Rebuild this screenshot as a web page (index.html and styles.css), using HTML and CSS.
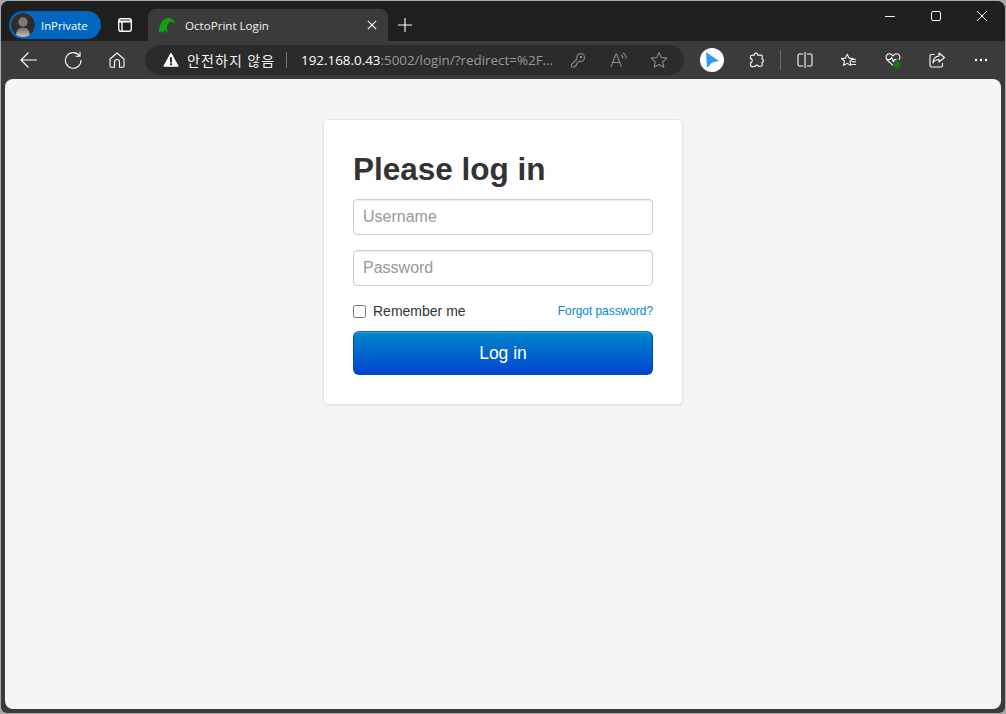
FILE: index.html
```html
<!DOCTYPE html>
<html lang="en">
<head>
<meta charset="utf-8">
<title>OctoPrint Login</title>
<link rel="stylesheet" href="styles.css">
</head>
<body>
<div class="window">
  <div class="tabstrip">
    <div class="inprivate">
      <span class="avatar">
        <svg viewBox="0 0 24 24" width="24" height="24"><defs><linearGradient id="ava" x1="0" y1="0" x2="0" y2="1"><stop offset="0" stop-color="#6f6d6b"/><stop offset="1" stop-color="#c4c0b8"/></linearGradient></defs><circle cx="12" cy="12" r="12" fill="#302d2b"/><circle cx="12" cy="9" r="4.700" fill="#7c7a78"/><path d="M5 24c-.5-6 2.500-9.500 7-9.500s7.500 3.500 6.500 9.500z" fill="url(#ava)"/></svg>
      </span>
      <span class="inprivate-label">InPrivate</span>
    </div>
    <span class="tabs-btn">
      <svg viewBox="0 0 14 14" width="14" height="14" fill="none" stroke="#fff" stroke-width="1.400"><rect x=".7" y=".7" width="12.600" height="12.600" rx="2.200"/><path d="M.7 3.500h12.600" stroke-width="1.800"/><path d="M4 3.500v9.800"/></svg>
    </span>
    <div class="tab">
      <svg class="favicon" viewBox="0 0 16 15" width="16" height="15"><path d="M0 15C-.3 6.500 3.500 0 10 0c2.500 0 5 1.500 6 5.500-1.500-1.500-3-2-4.500-1.400C9.500 5 8 7 8 9.500c0 2 .3 3.800 1 5.500l-3.200-2.800L4 15l-1.500-1.800z" fill="#13a10e"/></svg>
      <span class="tab-title">OctoPrint Login</span>
      <svg class="tab-close" viewBox="0 0 10 10" width="10" height="10" stroke="#fff" stroke-width="1.100"><path d="M.8.800l8.400 8.400M9.200.800L.8 9.200"/></svg>
    </div>
    <span class="newtab">
      <svg viewBox="0 0 14 14" width="14" height="14" stroke="#fff" stroke-width="1.100"><path d="M7 0v14M0 7h14"/></svg>
    </span>
    <div class="winctl">
      <span class="winbtn"><svg viewBox="0 0 10 10" width="10" height="10" stroke="#fff"><path d="M0 5.500h10"/></svg></span>
      <span class="winbtn"><svg viewBox="0 0 10 10" width="10" height="10" fill="none" stroke="#fff"><rect x=".5" y=".5" width="9" height="9" rx="1.500"/></svg></span>
      <span class="winbtn"><svg viewBox="0 0 10 10" width="10" height="10" stroke="#fff"><path d="M0 0l10 10M10 0L0 10"/></svg></span>
    </div>
  </div>

  <div class="toolbar">
    <span class="tool"><svg viewBox="0 0 18 18" width="18" height="18" fill="none" stroke="#fff" stroke-width="1.100"><path d="M1 9h16M8.500 1.500L1 9l7.500 7.500"/></svg></span>
    <span class="tool"><svg viewBox="0 0 18 18" width="18" height="18" fill="none" stroke="#fff" stroke-width="1.100"><path d="M15.500 4.800A7.800 7.800 0 1 0 17 9"/><path d="M16 .8v4.400h-4.400"/></svg></span>
    <span class="tool"><svg viewBox="0 0 16 16" width="16" height="16" fill="none" stroke="#fff" stroke-width="1.100"><path d="M1 7l7-6 7 6v7a1.200 1.200 0 0 1-1.200 1.200H10.500V10a2.500 2.500 0 0 0-5 0v5.200H2.200A1.200 1.200 0 0 1 1 14z"/></svg></span>
    <div class="addressbar">
      <svg class="warn" viewBox="0 0 16 16" width="16" height="16"><path d="M8 1.200l7.200 13H.8z" fill="#fff" stroke="#fff" stroke-linejoin="round"/><path d="M7 5.200h2v5.300H7zM7 11.300h2v2H7z" fill="#2b2b2b"/></svg>
      <span class="warn-text">안전하지 않음</span>
      <span class="addr-sep"></span>
      <span class="url"><span class="url-host">192.168.0.43</span>:5002/login/?redirect=%2F...</span>
      <span class="addr-icon key"><svg viewBox="0 0 16 16" width="16" height="16" fill="none" stroke="#8a8a8a" stroke-width="1.100"><path d="M10.500 1.500a4 4 0 0 1 0 8c-.5 0-1-.1-1.400-.3L6.500 12v1.500H5V15H2l-.5-.5V12.500L7 7a4 4 0 0 1 3.500-5.500z"/><circle cx="11" cy="5" r=".7"/></svg></span>
      <span class="addr-icon aloud"><svg viewBox="0 0 18 16" width="18" height="16" fill="none" stroke="#8a8a8a" stroke-width="1.100"><path d="M1 15L6 2h.500l5 13M3 10.500h7"/><path d="M11 3c1.500.8 2 2 2 3.500M13 1c2 1 3.200 3 3 5.500"/></svg></span>
      <span class="addr-icon star"><svg viewBox="0 0 18 18" width="18" height="18" fill="none" stroke="#8a8a8a" stroke-width="1.100" stroke-linejoin="round"><path d="M9 1.500l2.300 5 5.500.6-4.100 3.700 1.200 5.400L9 13.400l-4.900 2.800 1.200-5.400L1.200 7.100l5.500-.6z"/></svg></span>
    </div>
    <span class="tool tool-first"><span class="bing"><svg viewBox="0 0 14 16" width="14" height="16"><path d="M1 0l13 9-7 1.500L2 16z" fill="#2f9bf5"/></svg></span></span>
    <span class="tool"><svg viewBox="0 0 15 16" width="15" height="16" fill="none" stroke="#fff" stroke-width="1.100" stroke-linejoin="round"><path d="M5.200 3.200C4.800.4 9.200.4 8.800 3.200l3.200-.2c.8 0 1.300.5 1.300 1.300L13 7c1.800-.4 1.800 3.600 0 3.200l.3 2.600c0 .8-.5 1.400-1.300 1.400l-2.500.3c.3-1.800-3.600-1.800-3.300 0l-3 .1c-1 0-1.700-.7-1.700-1.700l.2-2.500C3.700 10.900 3.700 6 1.500 6.700V4.500c0-.8.600-1.300 1.400-1.300z"/></svg></span>
    <span class="tool-sep"></span>
    <span class="tool"><svg viewBox="0 0 16 16" width="16" height="16" fill="none" stroke="#fff" stroke-width="1.100"><path d="M6 2H2.500C1.700 2 1 2.700 1 3.500v9c0 .8.700 1.500 1.500 1.500H6M10 2h3.500c.8 0 1.500.7 1.500 1.500v9c0 .8-.7 1.500-1.500 1.500H10M8 0v16"/></svg></span>
    <span class="tool"><svg viewBox="0 0 18 16" width="16" height="15" fill="none" stroke="#fff" stroke-width="1.200" stroke-linejoin="round"><path d="M7 1l2 4.300 4.500.5-3.400 3 1 4.700L7 11.200l-4.100 2.300 1-4.700L.5 5.800 5 5.300z"/><path d="M12 6.500h5M12 9.500h5M12 12.500h5"/></svg></span>
    <span class="tool"><svg viewBox="0 0 18 18" width="16" height="16" fill="none" stroke="#fff" stroke-width="1.200" stroke-linejoin="round"><path d="M9 15L2.500 9C0 6 1.500 2 5 2c2 0 3 1 4 2.500C10 3 11 2 13 2c3.500 0 5 4 2.500 7"/><path d="M1.500 8.500H6l1.500-2.500L9.500 11l1.500-2.500h2"/><circle cx="13.500" cy="14" r="3.800" fill="#107c10" stroke="none"/></svg></span>
    <span class="tool"><svg viewBox="0 0 16 16" width="16" height="16" fill="none" stroke="#fff" stroke-width="1.100" stroke-linejoin="round"><path d="M5.500 2.500h-3c-.8 0-1.500.7-1.500 1.500v9.500c0 .8.700 1.500 1.500 1.500H12c.8 0 1.500-.7 1.500-1.500V11"/><path d="M10 1l5.500 4.500L10 10V7.500C7 7.500 5 9 4 11c0-4 2-6.500 6-7z"/></svg></span>
    <span class="tool"><svg viewBox="0 0 14 4" width="14" height="4" fill="#fff"><circle cx="2" cy="2" r="1.200"/><circle cx="7" cy="2" r="1.200"/><circle cx="12" cy="2" r="1.200"/></svg></span>
  </div>

  <main class="content">
    <form class="signin">
      <h2 class="signin-heading">Please log in</h2>
      <input class="field" type="text" placeholder="Username">
      <input class="field" type="password" placeholder="Password">
      <div class="options">
        <label class="remember"><input class="check" type="checkbox"> Remember me</label>
        <a class="forgot" href="#">Forgot password?</a>
      </div>
      <button class="submit" type="button">Log in</button>
    </form>
  </main>
</div>
</body>
</html>
```
FILE: styles.css
```css
* { box-sizing: border-box; }
html, body { height: 100%; }
body {
  margin: 0;
  padding: 1px;
  background: #a8a8a8;
  overflow: hidden;
  font-family: "Liberation Sans", Arial, sans-serif;
}
svg { display: block; flex: none; }

.window {
  height: 712px;
  display: flex;
  flex-direction: column;
  background: #3b3b3b;
  border-radius: 8px 8px 6px 6px;
  overflow: hidden;
}

/* Tab strip */
.tabstrip {
  flex: none;
  height: 40px;
  display: flex;
  align-items: flex-end;
  background: #1f1f1f;
  padding-left: 8px;
  color: #fff;
  font-family: "Open Sans", "Noto Sans", sans-serif;
}
.inprivate {
  align-self: flex-start;
  margin-top: 10px;
  width: 92px;
  height: 28px;
  display: flex;
  align-items: center;
  gap: 6px;
  padding-left: 2px;
  border-radius: 14px;
  background: #0067c0;
}
.avatar { width: 24px; height: 24px; border-radius: 50%; overflow: hidden; }
.inprivate-label { font-size: 11.300px; }
.tabs-btn { align-self: flex-start; margin: 17px 0 0 17px; }
.tab {
  margin-left: 16px;
  width: 240px;
  height: 32px;
  display: flex;
  align-items: center;
  padding: 0 11px;
  background: #3b3b3b;
  border-radius: 8px 8px 0 0;
}
.favicon { margin-right: 10px; }
.tab-title { flex: 1; font-size: 11.600px; color: #f0f0f0; }
.newtab { align-self: flex-start; margin: 17px 0 0 10px; }
.winctl { align-self: flex-start; margin-left: auto; display: flex; }
.winbtn { width: 46px; height: 30px; display: flex; align-items: center; justify-content: center; }

/* Toolbar */
.toolbar {
  flex: none;
  height: 38px;
  display: flex;
  align-items: center;
  padding-left: 6px;
  background: #3b3b3b;
}
.tool { width: 44px; height: 30px; flex: none; display: flex; align-items: center; justify-content: center; }
.tool-first { margin-left: 6px; }
.tool-sep { width: 1px; height: 20px; margin: 0 2px; background: #6a6a6a; flex: none; }
.bing {
  width: 24px; height: 24px; border-radius: 50%;
  background: #fff;
  display: flex; align-items: center; justify-content: center;
}
.addressbar {
  margin-left: 6px;
  width: 539px;
  height: 30px;
  display: flex;
  align-items: center;
  padding-left: 18px;
  border-radius: 15px;
  background: #2b2b2b;
  color: #9a9a9a;
  font-family: "Open Sans", "Noto Sans", sans-serif;
  font-size: 14px;
}
.warn-text {
  width: 87px;
  margin-left: 8px;
  color: #f2f2f2;
  font-family: "Noto Sans CJK KR", sans-serif;
  font-size: 14px;
  letter-spacing: 1.100px;
  white-space: nowrap;
}
.addr-sep { width: 1px; height: 16px; margin: 0 14px 0 12px; background: #777; }
.url { width: 256px; white-space: nowrap; font-size: 13.400px; }
.url-host { color: #fff; }
.addr-icon { display: flex; justify-content: center; }
.key { width: 40px; margin-left: 1px; }
.aloud { width: 42px; }
.star { width: 38px; }

/* Page */
.content {
  flex: 1;
  margin: 0 4px 4px;
  padding-top: 40px;
  background: #f5f5f5;
  border-radius: 8px;
}
.signin {
  width: 360px;
  margin: 0 auto;
  padding: 19px 29px 29px;
  background: #fff;
  border: 1px solid #e5e5e5;
  border-radius: 5px;
  box-shadow: 0 1px 2px rgba(0, 0, 0, .05);
}
.signin-heading {
  margin: 10px 0;
  color: #333;
  font-size: 31.500px;
  line-height: 40px;
  font-weight: bold;
}
.field {
  display: block;
  width: 100%;
  height: 36px;
  margin: 0 0 15px;
  padding: 7px 9px;
  border: 1px solid #ccc;
  border-radius: 4px;
  background: #fff;
  color: #555;
  font: 16px "Liberation Sans", Arial, sans-serif;
  box-shadow: inset 0 1px 1px rgba(0, 0, 0, .075);
  outline: 0;
}
.field::placeholder { color: #999; opacity: 1; }
.options {
  display: flex;
  align-items: center;
  justify-content: space-between;
  height: 20px;
  margin-bottom: 10px;
}
.remember {
  display: flex;
  align-items: center;
  color: #333;
  font-size: 14px;
  gap: 7px;
}
.check { width: 13px; height: 13px; margin: 0; }
.forgot { color: #08c; font-size: 11.900px; text-decoration: none; }
.submit {
  display: block;
  width: 100%;
  height: 44px;
  padding: 0;
  border: 1px solid #04c;
  border-color: #0068b0 #04c #04c;
  border-radius: 6px;
  background: linear-gradient(to bottom, #08c, #04c);
  box-shadow: inset 0 1px 0 rgba(255, 255, 255, .2);
  color: #fff;
  font: 17.500px "Liberation Sans", Arial, sans-serif;
}
```
